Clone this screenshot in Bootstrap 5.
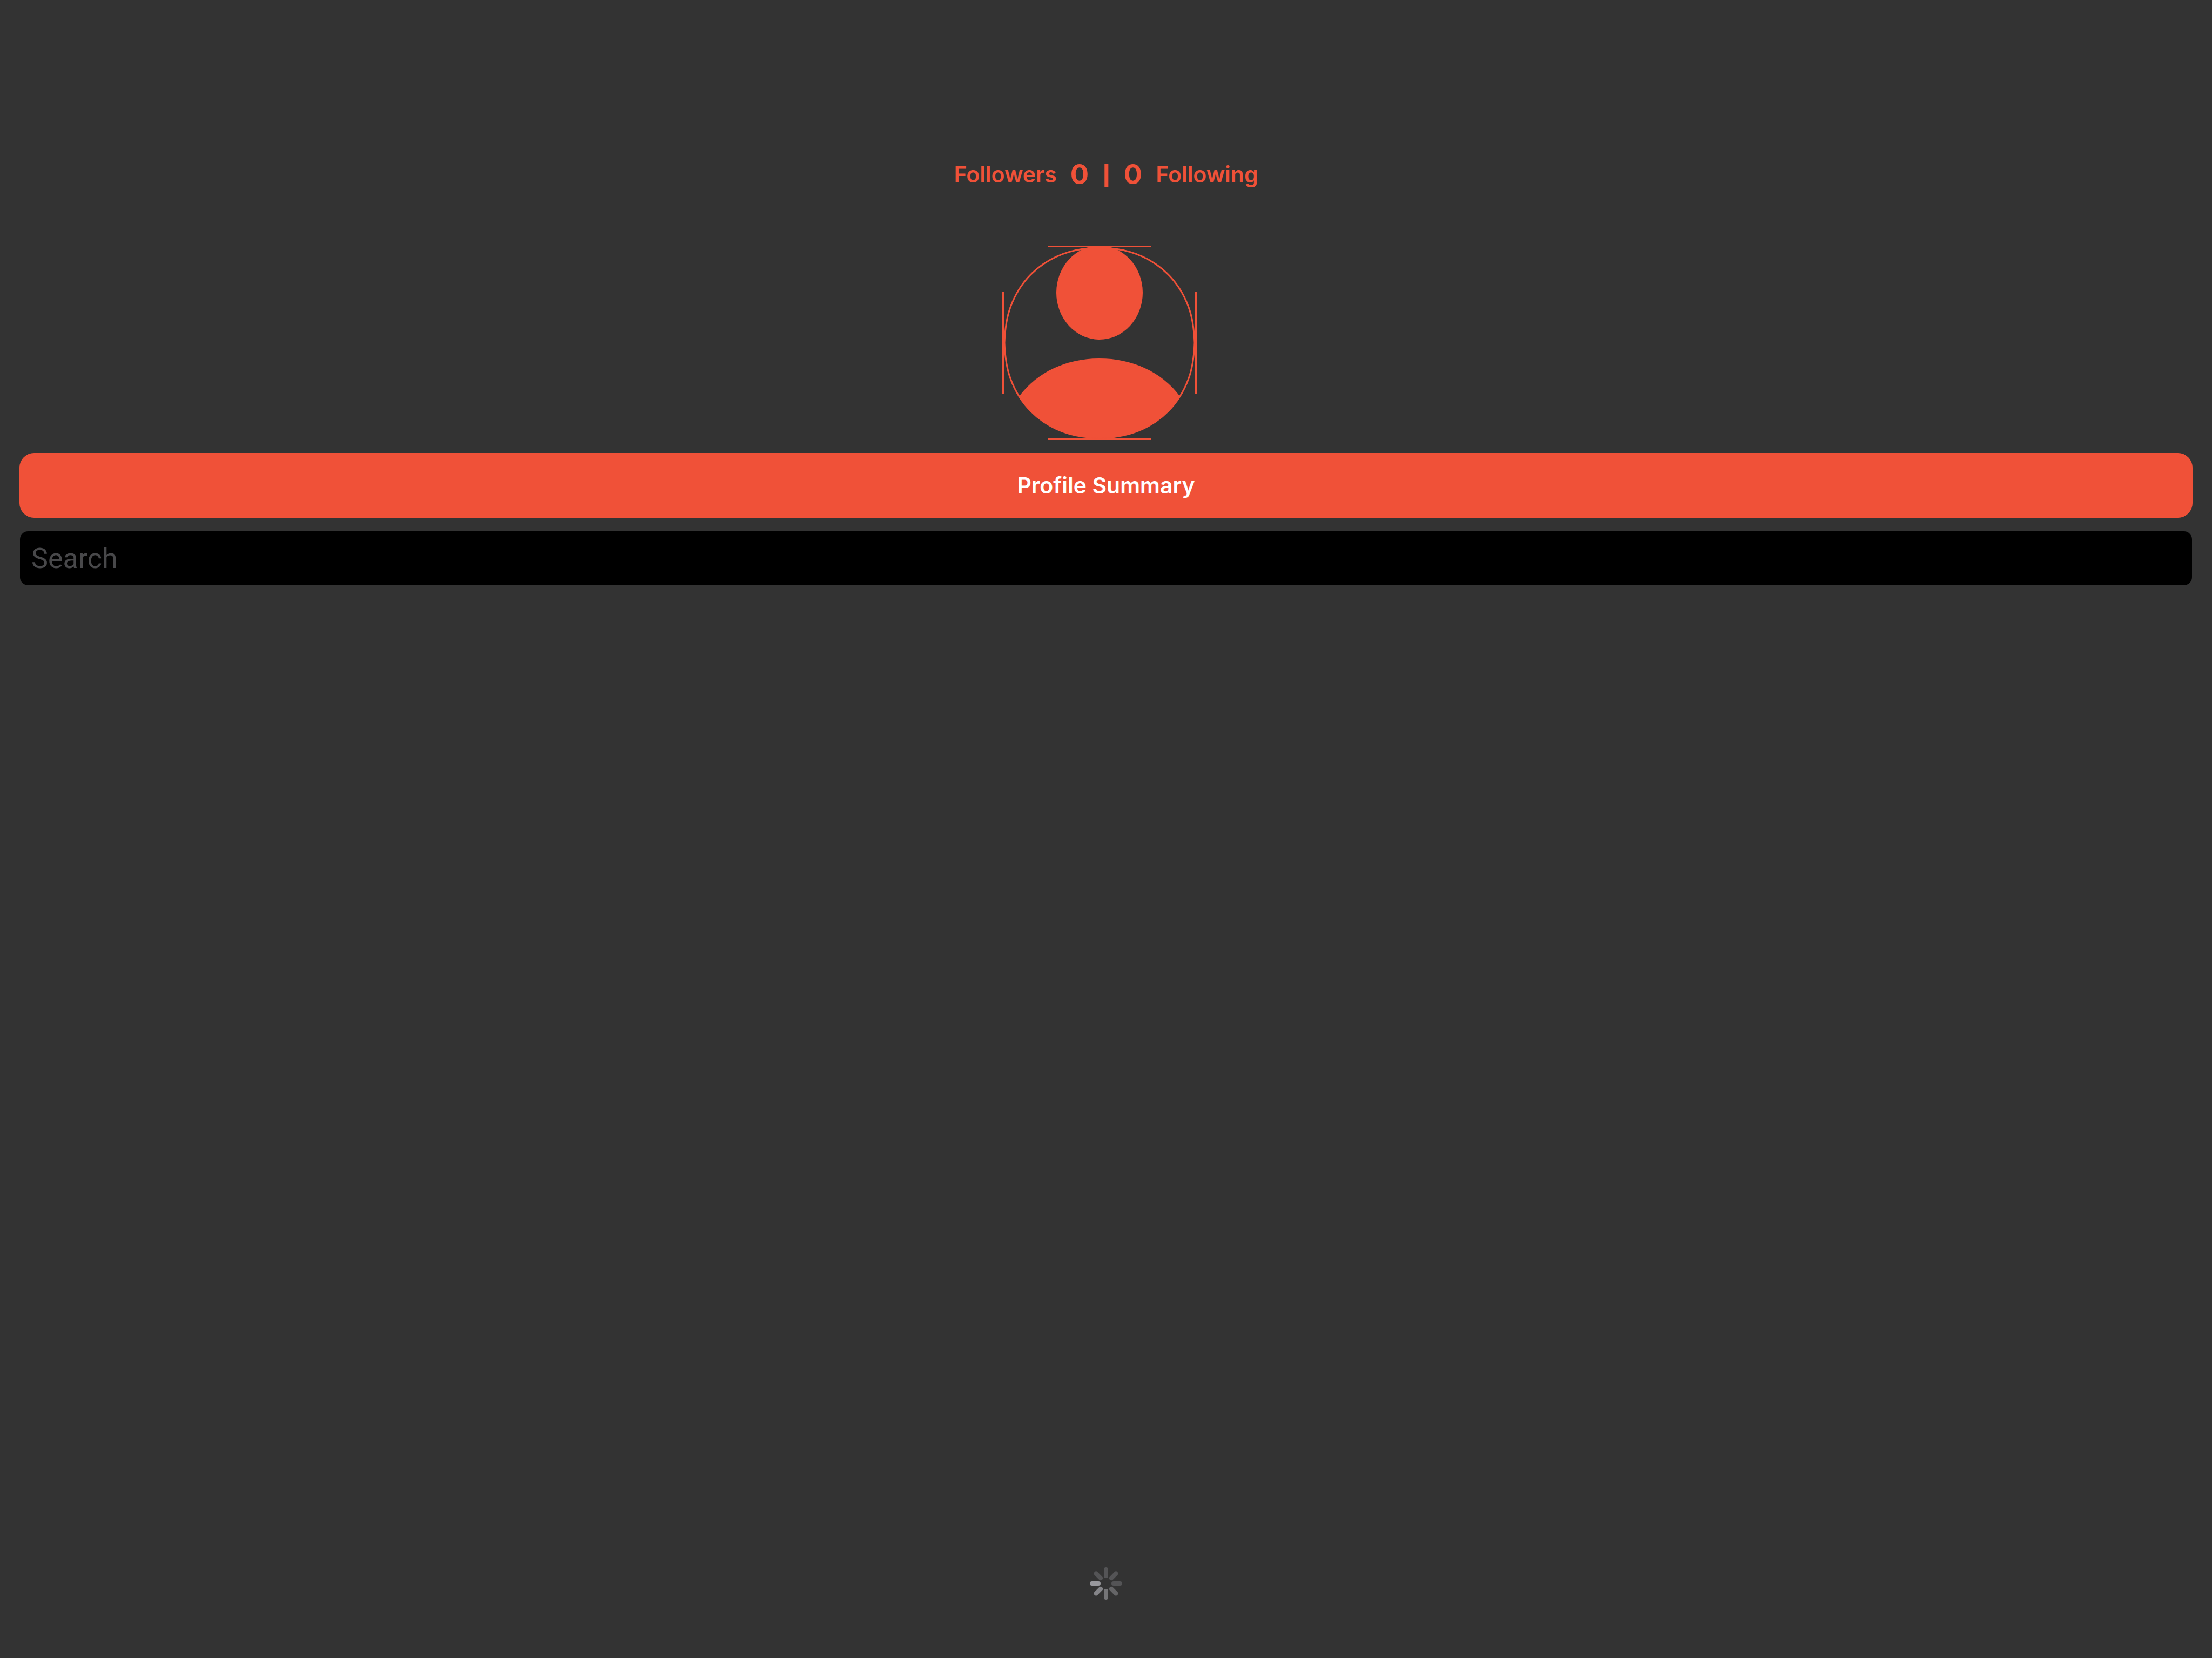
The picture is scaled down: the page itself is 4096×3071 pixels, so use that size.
<!DOCTYPE html>
<html lang="en">
<head>
<meta charset="utf-8">
<meta name="viewport" content="width=device-width, initial-scale=1">
<title>Profile</title>
<link href="https://cdn.jsdelivr.net/npm/bootstrap@5.3.0/dist/css/bootstrap.min.css" rel="stylesheet">
<style>
:root { --accent: #f05138; }
body { background: #333333; color: var(--accent); font-family: Inter, "Liberation Sans", sans-serif; }
.screen { padding: 287px 36px 108px; }
.stats { gap: 25px; height: 72px; font-size: 41px; line-height: 72px; }
.stats a { color: var(--accent); }
.stats .count { font-size: 51px; }
.stats .divider { padding-top: 6px; font-size: 36px; font-weight: 900; }
.avatar { margin: 96px 24px 24px 0; }
.avatar svg { width: 360px; height: 360px; fill: var(--accent); }
.avatar .outline { fill: none; stroke: var(--accent); stroke-width: 3px; }
.btn-summary { height: 120px; border: 0; border-radius: 27px; background: var(--accent); color: #fff; font-size: 41px; line-height: 48px; }
.btn-summary:hover { background: var(--accent); color: #fff; }
.search-form { margin-top: 25px; padding: 0 1px; }
.search-form .form-control { height: 100px; padding: 0 21px; border: 0; border-radius: 15px; background: #000; color: #fff; font-family: Roboto, "Liberation Sans", sans-serif; font-size: 52px; line-height: 60px; }
.search-form .form-control::placeholder { color: #48484a; opacity: 1; }
.loader svg { width: 60px; height: 60px; }
</style>
</head>
<body>
<main class="screen min-vh-100 d-flex flex-column">
  <nav class="stats d-flex justify-content-center align-items-center" aria-label="Connections">
    <a href="#" class="text-decoration-none fw-semibold">Followers</a>
    <span class="count fw-bold">0</span>
    <span class="divider">|</span>
    <span class="count fw-bold">0</span>
    <a href="#" class="text-decoration-none fw-semibold">Following</a>
  </nav>
  <div class="avatar d-flex justify-content-center">
    <svg viewBox="0 0 360 360" role="img" aria-label="Profile picture">
      <defs>
        <path id="ring" d="M4 180C5 154 8 133 15 114C40 46 100 4 180 4S320 46 345 114C352 133 355 154 356 180C355 206 352 227 345 246C320 314 260 356 180 356S40 314 15 246C8 227 5 206 4 180z"/>
        <clipPath id="inside"><use href="#ring"/></clipPath>
      </defs>
      <path d="M85 0H275V3H85zM85 357H275V360H85zM0 85H3V275H0zM357 85H360V275H357z"/>
      <use href="#ring" class="outline"/>
      <ellipse cx="180" cy="87" rx="80" ry="87"/>
      <path clip-path="url(#inside)" d="M32 278C66 233 120 209 180 209S294 233 328 278V360H32z"/>
    </svg>
  </div>
  <button type="button" class="btn btn-summary w-100 fw-semibold">Profile Summary</button>
  <form class="search-form" role="search">
    <input type="text" class="form-control" placeholder="Search" aria-label="Search">
  </form>
  <div class="loader d-flex justify-content-center mt-auto" role="status" aria-label="Loading">
    <svg viewBox="0 0 60 60" stroke-width="8" stroke-linecap="round">
      <path d="M30 4V16" stroke="#545456"/>
      <path d="M30 4V16" stroke="#545456" transform="rotate(45 30 30)"/>
      <path d="M30 4V16" stroke="#545456" transform="rotate(90 30 30)"/>
      <path d="M30 4V16" stroke="#656567" transform="rotate(135 30 30)"/>
      <path d="M30 4V16" stroke="#757577" transform="rotate(180 30 30)"/>
      <path d="M30 4V16" stroke="#858589" transform="rotate(225 30 30)"/>
      <path d="M30 4V16" stroke="#98989d" transform="rotate(270 30 30)"/>
      <path d="M30 4V16" stroke="#545456" transform="rotate(315 30 30)"/>
    </svg>
  </div>
</main>
<script src="https://cdn.jsdelivr.net/npm/bootstrap@5.3.0/dist/js/bootstrap.bundle.min.js"></script>
</body>
</html>
